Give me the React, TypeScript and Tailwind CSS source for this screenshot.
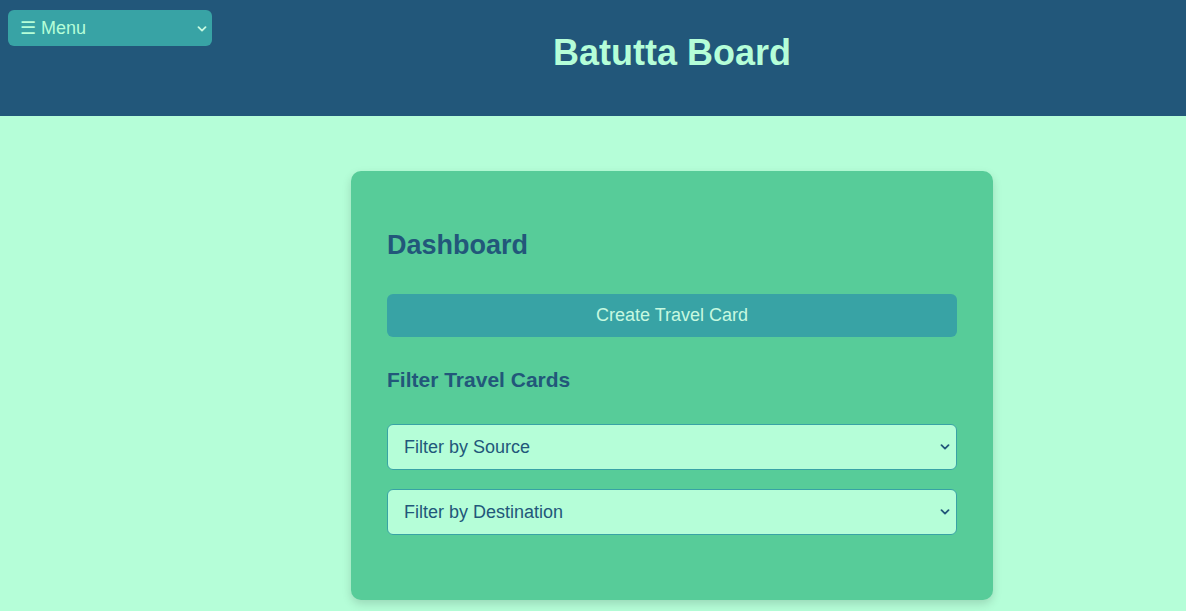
import React from 'react'

function Chevron({ className }: { className: string }) {
  return (
    <svg viewBox="0 0 10 6" className={className} fill="none" stroke="currentColor" strokeWidth="1.8" strokeLinecap="round" strokeLinejoin="round">
      <path d="M1.5 1.2 5 4.6 8.5 1.2" />
    </svg>
  )
}

function FilterSelect({ label }: { label: string }) {
  return (
    <div className="relative">
      <select className="w-full h-[46px] appearance-none rounded-md border border-[#38a3a5] bg-[#b5fed8] pl-4 pr-10 text-[18px] text-[#22577a] outline-none">
        <option>{label}</option>
      </select>
      <Chevron className="pointer-events-none absolute right-[7px] top-[20px] w-[10px] h-[6px] text-[#22577a]" />
    </div>
  )
}

export default function App() {
  return (
    <div className="min-h-[611px] bg-[#b5fed8] font-['Liberation_Sans',Arial,sans-serif]">
      <header className="relative h-[116px] bg-[#22577a] flex">
        <div className="absolute left-2 top-[10px]">
          <select className="w-[204px] h-[36px] appearance-none rounded-md bg-[#38a3a5] pl-3 pt-[1px] text-[18px] text-[#b5fed8] outline-none">
            <option>☰ Menu</option>
          </select>
          <Chevron className="pointer-events-none absolute right-[5px] top-[16px] w-[10px] h-[6px] text-[#c7f9e0]" />
        </div>
        <div className="w-[158px] shrink-0" />
        <div className="flex-1 flex justify-center pt-[32px]">
          <h1 className="text-[36px] leading-[41px] font-bold text-[#b5fed8]">Batutta Board</h1>
        </div>
      </header>

      <div className="flex">
        <div className="w-[158px] shrink-0" />
        <main className="flex-1 flex justify-center pt-[55px]">
          <div className="w-[642px] rounded-[10px] bg-[#57cc99] px-9 pt-[60px] pb-[65px] shadow-[0_4px_10px_rgba(0,0,0,0.15)]">
            <h2 className="text-[27px] leading-[28px] font-bold text-[#22577a]">Dashboard</h2>
            <button className="mt-[35px] w-full h-[43px] rounded-md bg-[#38a3a5] text-[18px] text-[#c7f9e0]">
              Create Travel Card
            </button>
            <h3 className="mt-[31px] text-[21px] leading-[24px] font-bold text-[#22577a]">Filter Travel Cards</h3>
            <div className="mt-[32px] flex flex-col gap-[19px]">
              <FilterSelect label="Filter by Source" />
              <FilterSelect label="Filter by Destination" />
            </div>
          </div>
        </main>
      </div>
    </div>
  )
}
